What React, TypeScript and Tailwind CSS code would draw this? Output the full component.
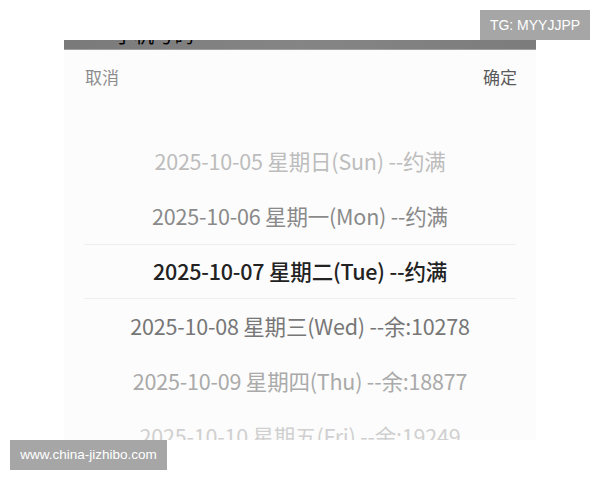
import React from 'react';

const rows = [
  { text: '2025-10-05 星期日(Sun) --约满', cls: 'text-[#bdbdbd]' },
  { text: '2025-10-06 星期一(Mon) --约满', cls: 'text-[#8a8a8a]' },
  { text: '2025-10-07 星期二(Tue) --约满', cls: 'text-[#222222] font-medium' },
  { text: '2025-10-08 星期三(Wed) --余:10278', cls: 'text-[#777777]' },
  { text: '2025-10-09 星期四(Thu) --余:18877', cls: 'text-[#aaaaaa]' },
  { text: '2025-10-10 星期五(Fri) --余:19249', cls: 'text-[#d0d0d0]' },
];

const font = { fontFamily: '"Noto Sans CJK SC", "Noto Sans", sans-serif' };
const mark = { fontFamily: '"Liberation Sans", sans-serif' };

export default function App() {
  return (
    <div className="relative w-[600px] h-[480px] bg-white overflow-hidden" style={font}>
      <div className="pt-[40px] px-[64px] w-[600px]">
        {/* top bar with clipped text */}
        <div className="h-[10px] overflow-hidden bg-gradient-to-r from-[#7a7a7a] via-[#858585] to-[#7c7c7c] border-b border-[#a0a0a0]">
          <div className="-mt-[17px] pl-[50px] text-[20px] leading-[24px] text-black">手机号码</div>
        </div>
        <div className="h-[390px] overflow-hidden bg-[#fcfcfc]">
          <div className="flex justify-between items-center h-[54px] pl-[21px] pr-[19px] text-[17px]">
            <span className="text-[#8c8c8c]">取消</span>
            <span className="text-[#5a5a5a]">确定</span>
          </div>
          <div className="h-[30px]" />
          <div className="flex flex-col">
            {rows.map((r, i) => (
              <div
                key={i}
                className={`h-[55px] flex items-center justify-center text-[21.5px] tracking-[-0.2px] ${r.cls} ${
                  i === 2 ? 'border-y border-[#eeeeee] mx-[20px]' : ''
                }`}
              >
                {r.text}
              </div>
            ))}
          </div>
        </div>
      </div>
      <div className="absolute left-[480px] top-[10px] w-[110px] h-[30px] bg-[#a6a6a6] text-white text-[14px] flex items-center justify-center" style={mark}>
        TG: MYYJJPP
      </div>
      <div className="absolute left-[10px] top-[440px] w-[157px] h-[30px] bg-[#a6a6a6] text-white text-[13.5px] flex items-center justify-center" style={mark}>
        www.china-jizhibo.com
      </div>
    </div>
  );
}
